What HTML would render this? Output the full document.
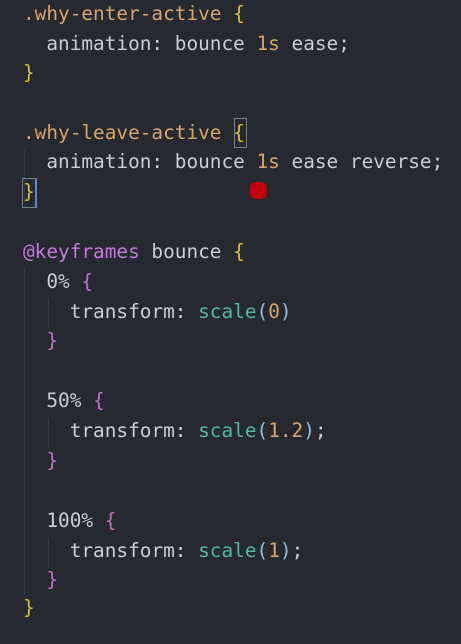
<!DOCTYPE html>
<html><head><style>
html,body{margin:0;padding:0;}
body{width:461px;height:644px;background:#262930;overflow:hidden;position:relative;font-family:"DejaVu Sans Mono","Liberation Mono",monospace;font-size:19.4px;}
.l{position:absolute;left:23px;height:30px;line-height:30px;white-space:pre;color:#c9cdd4;}
.s{color:#d7a56e}.b{color:#e2c02c}.n{color:#d7a56e}.k{color:#c678dd}.f{color:#4fb8a6}.p{color:#8fc3e6}.m{color:#c66ec8}
.g{position:absolute;width:1px;background:#363a43;}
.cur{position:absolute;border:1px solid #7a7f88;}
</style></head><body>
<div class="g" style="left:24px;top:150px;height:56px"></div>
<div class="g" style="left:24px;top:268px;height:330px"></div>
<div class="g" style="left:48px;top:298px;height:30px"></div>
<div class="g" style="left:48px;top:418px;height:30px"></div>
<div class="g" style="left:48px;top:538px;height:30px"></div>
<div class="cur" style="left:234px;top:118px;width:11px;height:28px"></div>
<div class="cur" style="left:22px;top:178px;width:12px;height:28px;border-right:2px solid #5a86d6"></div>
<div style="position:absolute;left:250px;top:182px;width:17px;height:17px;border-radius:6px;background:#c4000a"></div>
<div class="l" style="top:-1px"><span class="s">.why-enter-active</span> <span class="b">{</span></div>
<div class="l" style="top:29px">  animation: bounce <span class="n">1s</span> ease;</div>
<div class="l" style="top:58px"><span class="b">}</span></div>
<div class="l" style="top:118px"><span class="s">.why-leave-active</span> <span class="b">{</span></div>
<div class="l" style="top:147px">  animation: bounce <span class="n">1s</span> ease reverse;</div>
<div class="l" style="top:177px"><span class="b">}</span></div>
<div class="l" style="top:237px"><span class="k">@keyframes</span> bounce <span class="b">{</span></div>
<div class="l" style="top:267px">  0% <span class="m">{</span></div>
<div class="l" style="top:297px">    transform: <span class="f">scale</span><span class="p">(</span><span class="n">0</span><span class="p">)</span></div>
<div class="l" style="top:326px">  <span class="m">}</span></div>
<div class="l" style="top:386px">  50% <span class="m">{</span></div>
<div class="l" style="top:416px">    transform: <span class="f">scale</span><span class="p">(</span><span class="n">1.2</span><span class="p">)</span>;</div>
<div class="l" style="top:446px">  <span class="m">}</span></div>
<div class="l" style="top:506px">  100% <span class="m">{</span></div>
<div class="l" style="top:536px">    transform: <span class="f">scale</span><span class="p">(</span><span class="n">1</span><span class="p">)</span>;</div>
<div class="l" style="top:565px">  <span class="m">}</span></div>
<div class="l" style="top:593px"><span class="b">}</span></div>
</body></html>
